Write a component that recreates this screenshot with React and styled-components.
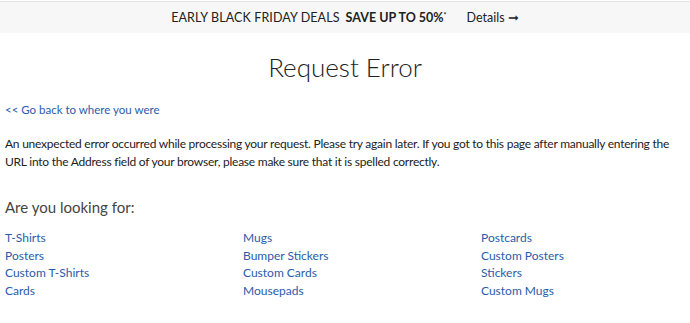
import React from 'react';
import styled, { createGlobalStyle } from 'styled-components';

const GlobalStyle = createGlobalStyle`
  body {
    margin: 0;
    background: #fff;
    font-family: Lato, "Liberation Sans", sans-serif;
    color: #222;
  }
`

const PromoBar = styled.div`
  background-color: #f7f7f7;
  border-top: 1px solid #e2e2e2;
  margin-top: 1px;
  height: 31px;
  display: flex;
  justify-content: center;
  align-items: center;
  font-size: 12.5px;
  color: #222;
`

const PromoText = styled.span`
  letter-spacing: 0.1px;
`

const PromoStrong = styled.b`
  font-weight: 700;
  margin-left: 6px;
`

const PromoStar = styled.sup`
  font-size: 7px;
  vertical-align: 4px;
`

const DetailsLink = styled.a`
  margin-left: 20px;
  color: #222;
  text-decoration: none;
`

const Page = styled.div`
  padding: 0 5px;
`

const Title = styled.h1`
  margin: 18px 0 0;
  text-align: center;
  font-weight: 300;
  font-size: 26px;
  line-height: 32px;
  color: #222;
`

const BackLink = styled.a`
  display: block;
  margin-top: 20px;
  font-size: 11.5px;
  color: #2a5caa;
  text-decoration: none;
`

const Message = styled.p`
  margin: 19px 0 0;
  font-size: 12px;
  line-height: 18px;
  letter-spacing: -0.24px;
  color: #222;
`

const SubTitle = styled.h2`
  margin: 27px 0 0;
  font-size: 15px;
  font-weight: 400;
  color: #444;
`

const LinkGrid = styled.div`
  margin-top: 13px;
  display: grid;
  grid-template-columns: 238px 238px 1fr;
  grid-auto-rows: 17.5px;
`

const ProductLink = styled.a`
  font-size: 12px;
  line-height: 17.5px;
  color: #2a5caa;
  text-decoration: none;
`

const links = [
  'T-Shirts', 'Mugs', 'Postcards',
  'Posters', 'Bumper Stickers', 'Custom Posters',
  'Custom T-Shirts', 'Custom Cards', 'Stickers',
  'Cards', 'Mousepads', 'Custom Mugs',
]

export default function App() {
  return (
    <>
      <GlobalStyle />
      <PromoBar>
        <PromoText>EARLY BLACK FRIDAY DEALS</PromoText>
        <PromoStrong>SAVE UP TO 50%<PromoStar>*</PromoStar></PromoStrong>
        <DetailsLink href="#">Details ➞</DetailsLink>
      </PromoBar>
      <Page>
        <Title>Request Error</Title>
        <BackLink href="#">&lt;&lt; Go back to where you were</BackLink>
        <Message>
          An unexpected error occurred while processing your request. Please try again later. If you got to this page after manually entering the URL into the Address field of your browser, please make sure that it is spelled correctly.
        </Message>
        <SubTitle>Are you looking for:</SubTitle>
        <LinkGrid>
          {links.map((l) => (
            <ProductLink key={l} href="#">{l}</ProductLink>
          ))}
        </LinkGrid>
      </Page>
    </>
  );
}
